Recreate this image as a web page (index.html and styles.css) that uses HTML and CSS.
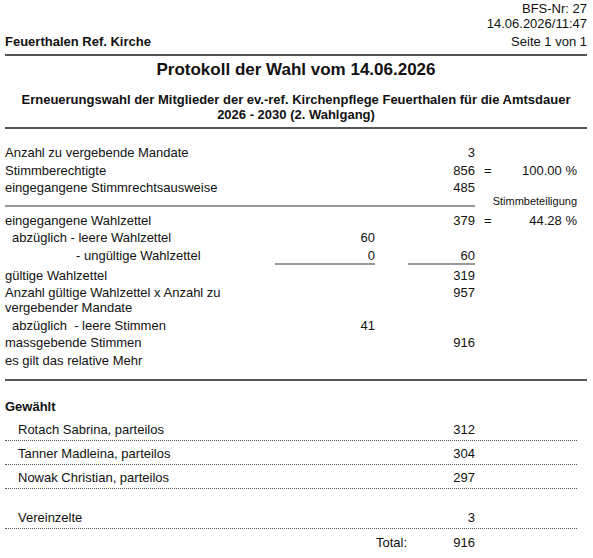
FILE: index.html
```html
<!DOCTYPE html>
<html lang="de">
<head>
  <meta charset="UTF-8">
  <title>Protokoll der Wahl</title>
  <link rel="stylesheet" href="styles.css">
</head>
<body>
  <header class="page-head">
    <div class="meta">
      <div>BFS-Nr: 27</div>
      <div>14.06.2026/11:47</div>
    </div>
    <div class="head-row">
      <span class="org">Feuerthalen Ref. Kirche</span>
      <span>Seite 1 von 1</span>
    </div>
  </header>

  <h1 class="title">Protokoll der Wahl vom 14.06.2026</h1>
  <h2 class="subtitle">Erneuerungswahl der Mitglieder der ev.-ref. Kirchenpflege Feuerthalen für die Amtsdauer 2026 - 2030 (2. Wahlgang)</h2>

  <section class="counts">
    <div class="row">
      <div class="label">Anzahl zu vergebende Mandate</div>
      <div class="mid"></div>
      <div class="num">3</div>
    </div>
    <div class="row">
      <div class="label">Stimmberechtigte</div>
      <div class="mid"></div>
      <div class="num">856</div>
      <div class="eq">=</div>
      <div class="pct">100.00 %</div>
    </div>
    <div class="row">
      <div class="label">eingegangene Stimmrechtsausweise</div>
      <div class="mid"></div>
      <div class="num">485</div>
    </div>
    <div class="row sep">
      <div class="rule"></div>
      <div class="note">Stimmbeteiligung</div>
    </div>
    <div class="row">
      <div class="label">eingegangene Wahlzettel</div>
      <div class="mid"></div>
      <div class="num">379</div>
      <div class="eq">=</div>
      <div class="pct">44.28 %</div>
    </div>
    <div class="row">
      <div class="label indent">abzüglich - leere Wahlzettel</div>
      <div class="mid">60</div>
      <div class="num"></div>
    </div>
    <div class="row subtotal">
      <div class="label indent-deep">- ungültige Wahlzettel</div>
      <div class="mid underline">0</div>
      <div class="num"><span class="underline short">60</span></div>
    </div>
    <div class="row">
      <div class="label">gültige Wahlzettel</div>
      <div class="mid"></div>
      <div class="num">319</div>
    </div>
    <div class="row">
      <div class="label">Anzahl gültige Wahlzettel x Anzahl zu vergebender Mandate</div>
      <div class="mid"></div>
      <div class="num">957</div>
    </div>
    <div class="row">
      <div class="label indent">abzüglich&nbsp; - leere Stimmen</div>
      <div class="mid">41</div>
      <div class="num"></div>
    </div>
    <div class="row">
      <div class="label">massgebende Stimmen</div>
      <div class="mid"></div>
      <div class="num">916</div>
    </div>
    <div class="row">
      <div class="label">es gilt das relative Mehr</div>
    </div>
  </section>

  <section class="elected">
    <h3>Gewählt</h3>
    <div class="row cand">
      <div class="label">Rotach Sabrina, parteilos</div>
      <div class="mid"></div>
      <div class="num">312</div>
    </div>
    <div class="row cand">
      <div class="label">Tanner Madleina, parteilos</div>
      <div class="mid"></div>
      <div class="num">304</div>
    </div>
    <div class="row cand">
      <div class="label">Nowak Christian, parteilos</div>
      <div class="mid"></div>
      <div class="num">297</div>
    </div>
    <div class="row cand scattered">
      <div class="label">Vereinzelte</div>
      <div class="mid"></div>
      <div class="num">3</div>
    </div>
    <div class="row total">
      <div class="label"></div>
      <div class="mid"></div>
      <div class="num"><span>Total:</span><span>916</span></div>
    </div>
  </section>
</body>
</html>
```

FILE: styles.css
```css
body {
  margin: 0;
  padding: 0 6px 0 5px;
  font-family: "Liberation Sans", Arial, sans-serif;
  font-size: 13px;
  color: #111;
  background: #fff;
}

/* Header */
.page-head {
  border-bottom: 2px solid #555;
  padding-bottom: 5px;
}
.meta {
  text-align: right;
  line-height: 15px;
  padding-top: 1px;
}
.head-row {
  display: flex;
  justify-content: space-between;
  line-height: 15px;
  margin-top: 3px;
}
.head-row .org { font-weight: 700; }

.title {
  font-size: 17px;
  line-height: 20px;
  text-align: center;
  margin: 4px 0 0;
}
.subtitle {
  font-size: 13px;
  line-height: 15px;
  text-align: center;
  margin: 12px 0 0;
  padding: 0 8px 5px;
  border-bottom: 2px solid #555;
}

/* Count rows */
.counts {
  margin-top: 15px;
  padding-right: 10px;
  padding-bottom: 10px;
  border-bottom: 2px solid #555;
  width: 572px;
}
.row {
  display: grid;
  grid-template-columns: 270px 100px 100px 25px 77px;
  line-height: 15px;
  padding: 1px 0 1.5px;
}
.mid, .num, .pct { text-align: right; }
.eq { padding-left: 9px; }
.indent { padding-left: 7px; }
.indent-deep { padding-left: 71px; }
.underline { border-bottom: 2px solid #999; }
.num .short {
  display: block;
  margin-left: 33px;
}
.subtotal { padding-bottom: 2px; }

.sep {
  height: 15px;
  padding: 0;
}
.sep .rule {
  grid-column: 1 / 4;
  height: 8px;
  border-bottom: 2px solid #999;
}
.sep .note {
  grid-column: 4 / 6;
  text-align: right;
  font-size: 11px;
  line-height: 12px;
  margin-top: -2px;
}

/* Elected */
.elected { width: 572px; }
.elected h3 {
  font-size: 13px;
  line-height: 15px;
  margin: 18px 0 3px;
}
.cand {
  padding: 5px 0 3px;
  border-bottom: 1px dotted #555;
}
.cand .label { padding-left: 13px; }
.scattered { margin-top: 16px; }
.total { padding: 6px 0 4px; }
.total .num {
  display: flex;
  justify-content: space-between;
  padding-left: 1px;
}
```
